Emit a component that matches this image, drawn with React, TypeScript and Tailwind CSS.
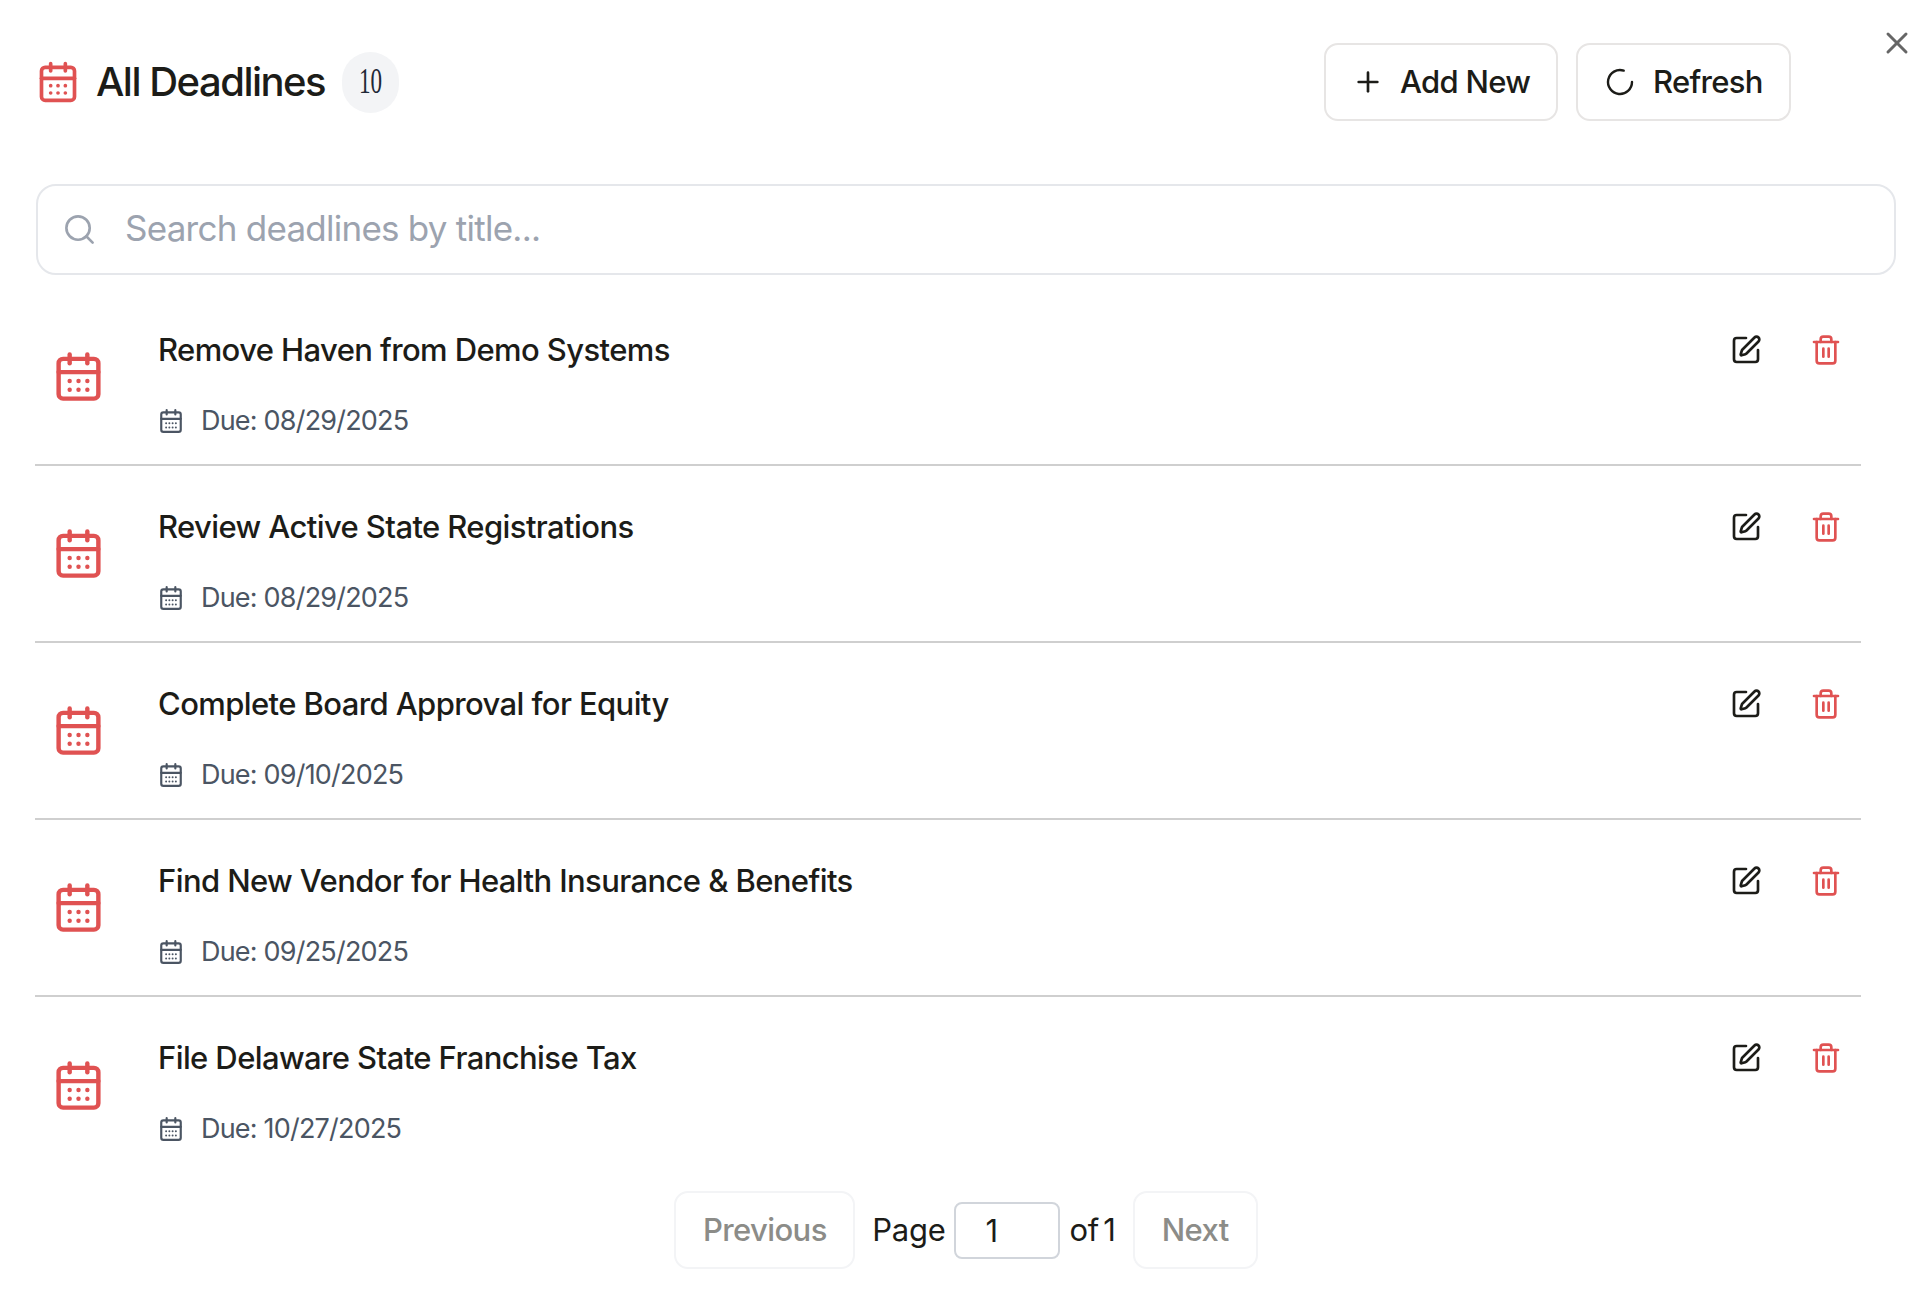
import { CalendarDays, LoaderCircle, Plus, Search, SquarePen, Trash2, X } from "lucide-react";

const deadlines = [
  { title: "Remove Haven from Demo Systems", due: "08/29/2025" },
  { title: "Review Active State Registrations", due: "08/29/2025" },
  { title: "Complete Board Approval for Equity", due: "09/10/2025" },
  { title: "Find New Vendor for Health Insurance & Benefits", due: "09/25/2025" },
  { title: "File Delaware State Franchise Tax", due: "10/27/2025" },
];

// small calendar with 4x2 dots, lucide has no such one
function DueIcon() {
  return (
    <svg viewBox="0 0 24 24" fill="none" stroke="currentColor" strokeWidth="2" strokeLinecap="round" className="w-[26px] h-[26px] shrink-0">
      <rect x="3" y="4" width="18" height="18" rx="2" />
      <path d="M3 10h18M8 2v4M16 2v4" />
      {[7.5, 10.5, 13.5, 16.5].map((x) => (
        <g key={x} fill="currentColor" stroke="none">
          <circle cx={x} cy="14" r="0.9" />
          <circle cx={x} cy="18" r="0.9" />
        </g>
      ))}
    </svg>
  );
}

export default function App() {
  return (
    <div className="relative w-[1930px] h-[1304px] bg-white pl-[36px] pr-[34px] pt-[43px] font-['Inter',sans-serif] text-[#1c1c18] overflow-hidden">
      {/* Close */}
      <button className="absolute right-[15px] top-[25px] text-[#666666]">
        <X className="w-[36px] h-[36px]" strokeWidth={2} />
      </button>

      {/* Header */}
      <div className="flex items-center justify-between h-[78px] pr-[105px]">
        <div className="flex items-center">
          <CalendarDays className="w-[44px] h-[44px] text-[#e05252]" />
          <h1 className="ml-[16px] text-[40px] font-medium tracking-[-1.5px]">All Deadlines</h1>
          <span className="ml-[17px] flex items-center justify-center w-[57px] h-[61px] rounded-full bg-[#f3f4f6]">
            <span className="font-['Liberation_Serif',serif] text-[35px] text-[#1f2937] scale-x-[0.66]">10</span>
          </span>
        </div>
        <div className="flex items-center gap-[18px]">
          <button className="flex items-center h-[78px] w-[234px] pl-[26px] rounded-[14px] border-2 border-[#e7e5e4] text-[31px] font-medium tracking-[-0.7px]">
            <Plus className="w-[32px] h-[32px]" strokeWidth={2} />
            <span className="ml-[16px]">Add New</span>
          </button>
          <button className="flex items-center h-[78px] w-[215px] pl-[26px] rounded-[14px] border-2 border-[#e7e5e4] text-[31px] font-medium tracking-[-0.7px]">
            <LoaderCircle className="w-[32px] h-[32px]" strokeWidth={1.8} />
            <span className="ml-[17px]">Refresh</span>
          </button>
        </div>
      </div>

      {/* Search */}
      <div className="flex items-center mt-[63px] h-[91px] rounded-[20px] border-2 border-[#e5e7eb] pl-[24px]">
        <Search className="w-[35px] h-[35px] text-[#9ca3af]" strokeWidth={1.8} />
        <input
          placeholder="Search deadlines by title..."
          className="ml-[28px] pb-[2px] flex-1 bg-transparent outline-none text-[35px] tracking-[-0.75px] placeholder:text-[#9ca3af]"
        />
      </div>

      {/* List */}
      <div className="mt-[14px] w-[1826px] -ml-[1px]">
        {deadlines.map((d, i) => (
          <div
            key={d.title}
            className={`flex items-center h-[177px] pl-[17px] pr-[19px] ${i < deadlines.length - 1 ? "border-b-2 border-[#cfcfcf]" : ""}`}
          >
            <CalendarDays className="w-[53px] h-[53px] text-[#e05252] shrink-0" />
            <div className="ml-[53px] flex-1 self-start pt-[40px]">
              <div className="text-[31px] leading-[42px] font-medium tracking-[-0.6px]">{d.title}</div>
              <div className="mt-[29px] flex items-center text-[#4b5563] text-[27px] leading-[42px] tracking-[-0.8px]">
                <DueIcon />
                <span className="ml-[17px]">Due: {d.due}</span>
              </div>
            </div>
            <div className="self-start mt-[45px] flex items-center gap-[48px]">
              <SquarePen className="w-[32px] h-[32px]" />
              <Trash2 className="w-[32px] h-[32px] text-[#e05252]" />
            </div>
          </div>
        ))}
      </div>

      {/* Pagination */}
      <div className="mt-[17px] flex items-center justify-center gap-[17px] text-[31px] tracking-[-0.3px]">
        <button className="h-[78px] w-[181px] rounded-[14px] border-2 border-[#f3f4f6] font-medium text-[#8c8c88] tracking-[-0.6px]">
          Previous
        </button>
        <div className="flex items-center gap-[9px]">
          <span>Page</span>
          <input
            defaultValue="1"
            className="w-[106px] h-[57px] rounded-[8px] border-2 border-[#d1d5db] pl-[29px] outline-none bg-transparent"
          />
          <span className="[word-spacing:-4px]">of 1</span>
        </div>
        <button className="h-[78px] w-[125px] rounded-[14px] border-2 border-[#f3f4f6] font-medium text-[#8c8c88] tracking-[-0.6px]">
          Next
        </button>
      </div>
    </div>
  );
}
